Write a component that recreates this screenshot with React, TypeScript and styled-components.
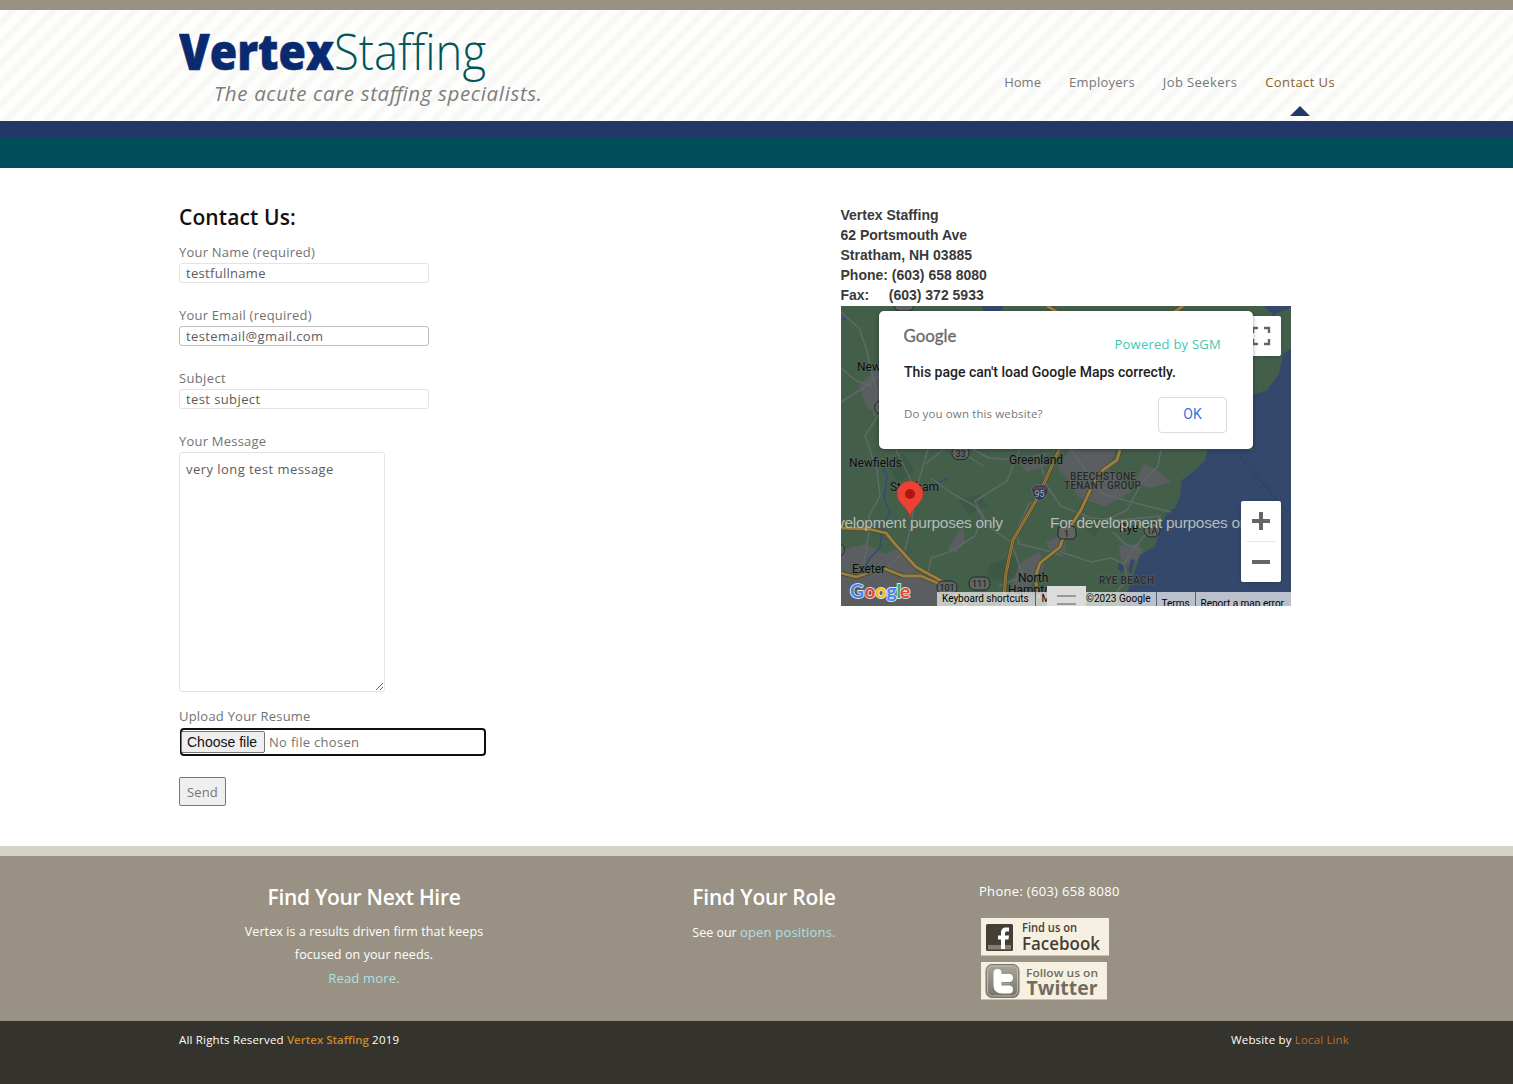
import React from 'react';
import styled, { createGlobalStyle } from 'styled-components';

const GlobalStyle = createGlobalStyle`
  *, *::before, *::after { box-sizing: border-box; }
  html, body { margin: 0; padding: 0; background: #fff; }
  body { font-family: "Open Sans", "Noto Sans", sans-serif; font-size: 13px; color: #666; }
  h1, h2, p { margin: 0; }
  a { color: inherit; text-decoration: none; }
`;

const Page = styled.div`
  display: flex;
  flex-direction: column;
  height: 1084px;
  overflow: hidden;
`;

const Header = styled.header`
  height: 121px;
  flex: none;
  display: flex;
  justify-content: space-between;
  padding: 0 178px 0 179px;
  border-top: 10px solid #999284;
  background: repeating-linear-gradient(135deg, #fefefd 0, #fefefd 5px, #f7f7f6 8px, #f7f7f6 11px, #fefefd 14.4px);
`;

const NavyBar = styled.div`
  height: 16px;
  flex: none;
  background: #233769;
`;

const TealBar = styled.div`
  height: 31px;
  flex: none;
  background: #004e59;
`;

const Logo = styled.svg`
  display: block;
  margin-top: 12px;
`;

const Nav = styled.nav`
  display: flex;
  gap: 28px;
  padding-top: 61px;
`;

const NavLink = styled.a<{ $active?: boolean; $ls?: number }>`
  display: flex;
  flex-direction: column;
  align-items: center;
  line-height: 22px;
  white-space: nowrap;
  letter-spacing: ${p => p.$ls ?? 0}px;
  color: ${p => (p.$active ? '#8a6217' : '#777')};
  &::after {
    content: '';
    display: ${p => (p.$active ? 'block' : 'none')};
    margin-top: 13px;
    border: solid transparent;
    border-width: 0 10px 10px;
    border-bottom-color: #233769;
  }
`;

const Main = styled.main`
  height: 678px;
  flex: none;
  display: grid;
  grid-template-columns: 661.5px 450px;
  padding: 37px 0 0 179px;
`;

const Title = styled.h1`
  font-size: 21px;
  font-weight: 600;
  line-height: 24px;
  letter-spacing: 0.1px;
  color: #111;
  margin-bottom: 13px;
`;

const Form = styled.form`
  display: flex;
  flex-direction: column;
  align-items: flex-start;
`;

const Field = styled.label`
  display: flex;
  flex-direction: column;
  margin-bottom: 22px;
`;

const Caption = styled.span<{ $ls?: number }>`
  line-height: 20px;
  height: 21px;
  letter-spacing: ${p => p.$ls ?? 0.22}px;
  color: #737373;
`;

const Input = styled.input<{ $strong?: boolean; $ls?: number }>`
  width: 250px;
  height: 20px;
  padding: 0 6px;
  border: 1px solid ${p => (p.$strong ? '#bdbdbd' : '#e4e4e4')};
  border-radius: 3px;
  outline: none;
  background: #fff;
  font: 13px "Open Sans", sans-serif;
  letter-spacing: ${p => p.$ls ?? 0.3}px;
  color: #5c5c5c;
`;

const MessageBox = styled.textarea`
  display: block;
  width: 206px;
  height: 240px;
  padding: 6px;
  border: 1px solid #e4e4e4;
  border-radius: 3px;
  outline: none;
  font: 13px/20px "Open Sans", sans-serif;
  letter-spacing: 0.45px;
  color: #5c5c5c;
  resize: both;
`;

const MessageField = styled(Field)`
  margin-bottom: 14px;
`;

const FileBox = styled.div`
  display: flex;
  align-items: center;
  gap: 4px;
  width: 306px;
  height: 28px;
  margin: 1px 0 0 1px;
  border: 2px solid #101010;
  border-radius: 4px;
  color: #737373;
  letter-spacing: 0.3px;
`;

const FileButton = styled.span`
  height: 22px;
  width: 84px;
  margin-left: -1px;
  padding-left: 5px;
  border: 1px solid #767676;
  border-radius: 2px;
  background: #efefef;
  font: 14px/20px "Liberation Sans", Arial, sans-serif;
  letter-spacing: 0;
  color: #111;
`;

const SendButton = styled.button`
  width: 47px;
  height: 29px;
  margin-top: -1px;
  padding: 0;
  border: 1px solid #767676;
  border-radius: 2px;
  background: #efefef;
  font: 13px "Open Sans", sans-serif;
  letter-spacing: 0.15px;
  color: #777;
`;

const Address = styled.address`
  font: bold 14px/20px "Liberation Sans", Arial, sans-serif;
  color: #3a3a3a;
  white-space: pre;
  margin-bottom: 1px;
`;

const MapFrame = styled.div`
  position: relative;
  width: 450px;
  height: 300px;
  overflow: hidden;
  background: #435f4a;
`;

const MapArt = styled.svg`
  display: block;
`;

const Control = styled.div<{ $top: number; $height: number }>`
  position: absolute;
  top: ${p => p.$top}px;
  right: 10px;
  width: 40px;
  height: ${p => p.$height}px;
  border-radius: 2px;
  background: #fff;
  box-shadow: 0 1px 4px -1px rgba(0, 0, 0, 0.3);
`;

const Dialog = styled.div`
  position: absolute;
  top: 5px;
  left: 38px;
  width: 374px;
  height: 138px;
  padding: 14px 25.5px 0;
  border-radius: 5px;
  background: #fff;
  box-shadow: 0 1px 4px rgba(0, 0, 0, 0.35);
`;

const DialogTop = styled.div`
  display: flex;
  justify-content: space-between;
  height: 38px;
`;

const Powered = styled.span`
  margin-top: 9px;
  padding-right: 6px;
  line-height: 20px;
  letter-spacing: 0.25px;
  color: #41c8b2;
`;

const DialogText = styled.p`
  font: 500 14px/18px Roboto, sans-serif;
  letter-spacing: 0;
  color: #212121;
`;

const DialogBottom = styled.div`
  display: flex;
  align-items: center;
  justify-content: space-between;
  height: 36px;
  margin-top: 16px;
  font-size: 11.5px;
  line-height: 16px;
  letter-spacing: 0.12px;
  color: #777;
`;

const Question = styled.span`
  padding-bottom: 2px;
`;

const OkButton = styled.span`
  width: 69px;
  height: 36px;
  border: 1px solid #dadce0;
  border-radius: 4px;
  text-align: center;
  font: 14px/33px Roboto, sans-serif;
  color: #3674e0;
`;

const Attribution = styled.div`
  position: absolute;
  left: 96px;
  right: 0;
  bottom: 0;
  height: 14px;
  display: flex;
  overflow: hidden;
  background: rgba(245, 245, 245, 0.7);
  font: 10px/14px Roboto, sans-serif;
  color: #000;
`;

const Credit = styled.span<{ $w: number; $drop?: boolean; $right?: boolean }>`
  flex: none;
  width: ${p => p.$w}px;
  padding: ${p => (p.$drop ? '5px' : '0')} 5px 0;
  border-left: 1px solid #56617a;
  text-align: ${p => (p.$right ? 'right' : 'left')};
  white-space: nowrap;
  &:first-child { border-left: 0; padding-left: 5.5px; }
`;

const DrawerHandle = styled.div`
  position: absolute;
  left: 206px;
  top: 280px;
  width: 39px;
  height: 20px;
  padding: 9px 10px 0;
  background: #dcdcdc;
  &::before {
    content: '';
    display: block;
    height: 10px;
    border: solid #999;
    border-width: 2px 0;
  }
`;

const Footer = styled.footer`
  height: 175px;
  flex: none;
  display: grid;
  grid-template-columns: repeat(3, 370px);
  column-gap: 30px;
  padding: 0 0 0 179px;
  border-top: 10px solid #d5d4c8;
  background: #999284;
  color: #fff;
`;

const Column = styled.section<{ $left?: boolean }>`
  padding-top: ${p => (p.$left ? 25 : 29)}px;
  text-align: ${p => (p.$left ? 'left' : 'center')};
`;

const FooterTitle = styled.h2<{ $ls: number }>`
  font-size: 21px;
  font-weight: 600;
  line-height: 24px;
  letter-spacing: ${p => p.$ls}px;
  margin-bottom: 11px;
`;

const FooterText = styled.p<{ $ls?: number; $gap?: number }>`
  padding-top: ${p => p.$gap ?? 0}px;
  font-size: 12.5px;
  line-height: 23.4px;
  letter-spacing: ${p => p.$ls ?? 0.1}px;
`;

const PaleLink = styled.a`
  font-size: 13px;
  letter-spacing: 0.18px;
  color: #ade0e2;
`;

const Phone = styled.p`
  font-size: 13px;
  line-height: 20px;
  letter-spacing: 0.3px;
  margin-bottom: 17px;
`;

const Badge = styled.svg`
  display: block;
  margin: 0 0 5.5px 1.5px;
`;

const Legal = styled.div`
  flex: 1;
  display: flex;
  justify-content: space-between;
  padding: 9px 164px 0 179px;
  background: #35332d;
  font-size: 11.5px;
  line-height: 20px;
  letter-spacing: 0.18px;
  color: #fff;
`;

const Amber = styled.a<{ $bold?: boolean }>`
  color: ${p => (p.$bold ? '#c98a2b' : '#b5702c')};
  font-weight: ${p => (p.$bold ? 600 : 400)};
  letter-spacing: ${p => (p.$bold ? 0 : 0.15)}px;
`;

const roads = [
  'M0 6 L18 22 L26 45 L30 65 L36 84 L33 110',
  'M0 62 L14 74 L30 80 M0 96 L22 82 L38 70',
  'M38 108 L24 130 L36 165 L39 190 L28 210 L28 226 L22 262',
  'M50 134 L67 168 L75 185 M88 140 L82 160 L75 185',
  'M75 185 L70 220 L64 244 L40 268',
  'M102 144 L84 158 M126 140 L148 152 L180 154 L205 148',
  'M178 144 L166 175 L134 195 L142 210 L134 230 L108 246 L90 252 L87 268',
  'M90 172 L112 188 L134 200 L150 222 L170 236 L182 270 L158 280',
  'M112 140 L142 160 M202 190 L188 198 L175 226 L178 238 L200 243 L222 250',
  'M198 152 L206 180 L220 200 L250 212 L280 214 L320 210',
  'M230 144 L246 166 L262 188 L290 196 L330 206',
  'M320 144 L317 160 L300 178 L286 204 L264 215',
  'M220 246 L250 256 L270 252 L283 258 L290 246 L318 212',
  'M283 258 L286 272 L276 286 L262 300 M272 226 L284 238 L300 244',
];

const highways = [
  'M218 144 L197 191 L172 234 L165 267 L162 300',
  'M279 144 L276 154 L262 164 L252 178 L240 204 L222 232 L219 241 L199 257 L194 272 L198 292',
  'M0 222 L28 223 L45 227 L54 238 L75 261 L106 278',
  'M0 267 L15 271 L42 262 L62 270 L80 270 L108 282 L126 300',
  'M206 0 L218 7 M330 8 L342 0',
];

const MapDrawing = () => (
  <MapArt width="450" height="300" viewBox="0 0 450 300">
    <rect width="450" height="300" fill="#435f4a" />
    <g fill="#3d5845">
      <path d="M45 155l18-8 10 18-16 12zM150 258l24-8 8 14-16 12-20-4zM118 194l22-6 6 12-18 8zM240 218l24-8-10 22z" />
    </g>
    <g fill="#5a5e61">
      <path d="M18 80l14-14 8-16v58l-14-6zM0 244l24-6 20 10 14-6 16 22 22 10 8 26H0z" />
      <path d="M228 144h46l-6 20 16 12 6 10-26 14-26-8-12-20-10-10z" />
      <path d="M302 158l14 6 14 12-20 6-16-4zM174 152l24-4 8 12-20 6zM112 234l10-14 2 16-8 10-10-2zM178 258l20-12 6 14-18 26 8 14h-30l10-30zM278 240l20-2 4 10-12 14-10-8zM205 236l18-8 2 16-14 6z" />
    </g>
    <g fill="#34486c">
      <path d="M366 144L364 154L352 166L341 174L339 191L334 202L326 207L319 221L314 241L307 244L299 249L291 274L286 286L280 300H450V40L439 51L437 67L426 84L412 89V144Z" />
      <path d="M422 0l10 8-4 8 8 4 14-12V0zM141 0h22l-4 6h-16zM450 60h-10l-4 12 14 12z" />
      <path d="M278 256l6 2-2 8-5-2zM290 253l4 1-4 14-3-4z" />
    </g>
    <path d="M412 50l20-6 10 4-4 20-12 16-14 4z" fill="#435f4a" />
    <path d="M434 8l16-6v40l-10 8-6-12z" fill="#435f4a" />
    <path d="M40 52l-6 10M6 12l-6 2M41 160l5 10-3 22 6 14-8 18-2 18-10 10-6 10M98 176l10-4" stroke="#354e70" strokeWidth="1.600" fill="none" />
    <path d="M393 144L450 210" stroke="#253653" strokeDasharray="2 2" fill="none" />
    <g fill="none" stroke="#5f6967" strokeWidth="1.500" strokeLinejoin="round">
      {roads.map(d => <path key={d} d={d} />)}
    </g>
    <g fill="none" stroke="#57491f" strokeWidth="4.600" strokeLinejoin="round">
      {highways.map(d => <path key={d} d={d} />)}
    </g>
    <g fill="none" stroke="#95804a" strokeWidth="2.800" strokeLinejoin="round">
      {highways.map(d => <path key={d} d={d} />)}
    </g>
    <path d="M218 144 L197 191 L172 234 L165 267 L162 300" fill="none" stroke="#6b5a2d" strokeWidth="0.800" />
    <g fill="#5f6561" stroke="#22282a" strokeWidth="1">
      <rect x="53" y="-9" width="20" height="14" rx="6" />
      <rect x="111" y="140.500" width="17" height="13" rx="6" />
      <rect x="96" y="275" width="20" height="13" rx="6" />
      <rect x="128" y="271" width="21" height="13" rx="6" />
      <rect x="303" y="217" width="16" height="14" rx="7" />
      <path d="M218 221q-3 11 2 12h12q5-1 2-12l-8-2z" />
      <path d="M38 95a7 7 0 0 0 0 13M0 238a7 7 0 0 1 0 12" />
    </g>
    <path d="M191 181l3-2h10l3 2c1 7-2 11-8 14-6-3-9-7-8-14z" fill="#313c55" stroke="#69727a" strokeWidth="0.800" />
    <path d="M192 182h14" stroke="#6c4343" strokeWidth="2" />
    <g fontFamily="Roboto, sans-serif" fontSize="9" fill="#15191a" textAnchor="middle">
      <text x="119.500" y="150.500">33</text>
      <text x="106" y="285">101</text>
      <text x="138.500" y="281">111</text>
      <text x="311" y="227.500">1A</text>
      <text x="225.500" y="230.500">1</text>
      <text x="198.500" y="190.500" fill="#a6abb4">95</text>
    </g>
    <g fontFamily="Roboto, sans-serif" fontSize="12" fill="#0b0d0d" stroke="#57655c" strokeWidth="1.400" paintOrder="stroke">
      <text x="16" y="65">New</text>
      <text x="8" y="161" textLength="53">Newfields</text>
      <text x="168" y="158" textLength="54">Greenland</text>
      <text x="49" y="185" textLength="49">Stratham</text>
      <text x="11" y="267" textLength="33">Exeter</text>
      <text x="177" y="276">North</text>
      <text x="167" y="288">Hampton</text>
      <text x="278" y="226">Rye</text>
    </g>
    <g fontFamily="Roboto, sans-serif" fontSize="10" fontWeight="500" fill="#26292b" stroke="#5d6561" strokeWidth="1" paintOrder="stroke">
      <text x="229" y="173.500" textLength="66">BEECHSTONE</text>
      <text x="223" y="182.500" textLength="77">TENANT GROUP</text>
      <text x="258" y="277.500" textLength="55">RYE BEACH</text>
    </g>
    <g fontFamily="Liberation Sans, Arial, sans-serif" fontSize="15.500" fill="#b5bcb8">
      <text x="-47" y="222" textLength="209">For development purposes only</text>
      <text x="209" y="222" textLength="209">For development purposes only</text>
    </g>
    <path d="M69 211C67 201 56 197 56 188a13 13 0 0 1 26 0C82 197 71 201 69 211Z" fill="#ea4335" stroke="#c5362b" strokeWidth="0.600" />
    <circle cx="69" cy="188" r="5" fill="#b31412" />
    <g fontFamily="Lato, sans-serif" fontSize="19" fontWeight="700" stroke="#dde3e0" strokeWidth="1.800" paintOrder="stroke">
      <text y="292">
        <tspan x="9" fill="#4285f4">G</tspan><tspan x="23.500" fill="#ea4335">o</tspan><tspan x="34.500" fill="#fbbc04">o</tspan><tspan x="45.500" fill="#4285f4">g</tspan><tspan x="55.500" fill="#34a853">l</tspan><tspan x="59" fill="#ea4335">e</tspan>
      </text>
    </g>
  </MapArt>
);

const MapWidget = () => (
  <MapFrame>
    <MapDrawing />
    <Control $top={10} $height={40}>
      <svg width="40" height="40" viewBox="0 0 40 40" fill="none" stroke="#666" strokeWidth="2.400">
        <path d="M12 17v-5h5M23 12h5v5M28 23v5h-5M17 28h-5v-5" />
      </svg>
    </Control>
    <Control $top={195} $height={81}>
      <svg width="40" height="81" viewBox="0 0 40 81" fill="none" stroke="#666" strokeWidth="4">
        <path d="M11 20h18M20 11v18M11 61h18" />
        <path d="M5 40.500h30" stroke="#e6e6e6" strokeWidth="1" />
      </svg>
    </Control>
    <Dialog>
      <DialogTop>
        <svg width="56" height="24" viewBox="0 0 56 24">
          <text x="-0.500" y="16.500" fontFamily="Lato, sans-serif" fontSize="16.500" fill="#6a6a6a" stroke="#6a6a6a" strokeWidth="0.300" textLength="53" lengthAdjust="spacingAndGlyphs">Google</text>
        </svg>
        <Powered>Powered by SGM</Powered>
      </DialogTop>
      <DialogText>This page can't load Google Maps correctly.</DialogText>
      <DialogBottom>
        <Question>Do you own this website?</Question>
        <OkButton>OK</OkButton>
      </DialogBottom>
    </Dialog>
    <Attribution>
      <Credit $w={98}>Keyboard shortcuts</Credit>
      <Credit $w={121} $right>Map data ©2023 Google</Credit>
      <Credit $w={39} $drop>Terms</Credit>
      <Credit $w={96} $drop>Report a map error</Credit>
    </Attribution>
    <DrawerHandle />
  </MapFrame>
);

const FacebookBadge = () => (
  <Badge width="129" height="38" viewBox="0 0 129 38">
    <rect width="128" height="37.500" fill="#f6f0e2" />
    <rect x="5" y="6" width="27" height="27" rx="1.500" fill="#453f33" />
    <rect x="7" y="27" width="23" height="4.500" fill="#857f72" />
    <path d="M20 31V21.500h-3V17.500h3v-2.500c0-4 2-5.500 5-5.500h3v4h-2c-1.500 0-2 .6-2 2v2h4l-.5 4H24V31z" fill="#fff" />
    <g fontFamily="Open Sans, sans-serif" fill="#453f33" fontWeight="600">
      <text x="41" y="14" fontSize="12" textLength="55" lengthAdjust="spacingAndGlyphs">Find us on</text>
      <text x="41" y="31.500" fontSize="18.500" textLength="78" lengthAdjust="spacingAndGlyphs">Facebook</text>
    </g>
  </Badge>
);

const TwitterBadge = () => (
  <Badge width="127" height="38" viewBox="0 0 127 38">
    <defs>
      <linearGradient id="bird" x1="0" y1="0" x2="0" y2="1">
        <stop offset="0" stopColor="#aaa69b" />
        <stop offset="1" stopColor="#78736a" />
      </linearGradient>
    </defs>
    <rect width="126" height="37.500" fill="#f6f0e2" />
    <rect x="5" y="2.500" width="33" height="33" rx="6" fill="url(#bird)" stroke="#77736a" />
    <rect x="6.500" y="4" width="30" height="30" rx="5" fill="none" stroke="#bcb8ad" />
    <path d="M16.500 11v12q0 4.500 5 4.500h6.500M16.500 16h11.500" fill="none" stroke="#fff" strokeWidth="8" strokeLinecap="round" strokeLinejoin="round" />
    <path d="M21 21.700h7" stroke="#aaa59a" strokeWidth="1.300" strokeLinecap="round" />
    <g fontFamily="Open Sans, sans-serif" fill="#716c60" fontWeight="600">
      <text x="45" y="14.500" fontSize="11.500" textLength="72" lengthAdjust="spacingAndGlyphs">Follow us on</text>
      <text x="45.500" y="33" fontSize="20" fontWeight="700" textLength="71" lengthAdjust="spacingAndGlyphs">Twitter</text>
    </g>
  </Badge>
);

export default function App() {
  return (
    <Page>
      <GlobalStyle />
      <Header>
        <Logo width="370" height="90" viewBox="0 0 370 90">
          <g fontFamily="Open Sans, sans-serif" fontSize="50">
            <text x="0" y="47.500" fontWeight="800" fill="#0a2a70" stroke="#0a2a70" strokeWidth="0.600" textLength="155" lengthAdjust="spacingAndGlyphs">Vertex</text>
            <text x="155" y="47.500" fontWeight="300" fill="#00565c" textLength="152" lengthAdjust="spacingAndGlyphs">Staffing</text>
          </g>
          <text x="35" y="79" fontFamily="Open Sans, sans-serif" fontSize="20.500" fontStyle="italic" fill="#7d7d7d" textLength="328">The acute care staffing specialists.</text>
        </Logo>
        <Nav>
          <NavLink>Home</NavLink>
          <NavLink $ls={0.25}>Employers</NavLink>
          <NavLink $ls={0.4}>Job Seekers</NavLink>
          <NavLink $ls={0.4} $active>Contact Us</NavLink>
        </Nav>
      </Header>
      <NavyBar />
      <TealBar />
      <Main>
        <Form>
          <Title>Contact Us:</Title>
          <Field>
            <Caption>Your Name (required)</Caption>
            <Input defaultValue="testfullname" />
          </Field>
          <Field>
            <Caption>Your Email (required)</Caption>
            <Input $strong $ls={0.4} defaultValue="testemail@gmail.com" />
          </Field>
          <Field>
            <Caption $ls={0.35}>Subject</Caption>
            <Input $ls={0.4} defaultValue="test subject" />
          </Field>
          <MessageField>
            <Caption>Your Message</Caption>
            <MessageBox defaultValue="very long test message" />
          </MessageField>
          <Field>
            <Caption>Upload Your Resume</Caption>
            <FileBox>
              <FileButton>Choose file</FileButton>
              <span>No file chosen</span>
            </FileBox>
          </Field>
          <SendButton type="button">Send</SendButton>
        </Form>
        <div>
          <Address>{'Vertex Staffing\n62 Portsmouth Ave\nStratham, NH 03885\nPhone: (603) 658 8080\nFax:     (603) 372 5933'}</Address>
          <MapWidget />
        </div>
      </Main>
      <Footer>
        <Column>
          <FooterTitle $ls={-0.3}>Find Your Next Hire</FooterTitle>
          <FooterText>Vertex is a results driven firm that keeps<br />focused on your needs.<br /><PaleLink>Read more.</PaleLink></FooterText>
        </Column>
        <Column>
          <FooterTitle $ls={-0.2}>Find Your Role</FooterTitle>
          <FooterText $ls={0} $gap={1}>See our <PaleLink>open positions.</PaleLink></FooterText>
        </Column>
        <Column $left>
          <Phone>Phone: (603) 658 8080</Phone>
          <FacebookBadge />
          <TwitterBadge />
        </Column>
      </Footer>
      <Legal>
        <span>All Rights Reserved <Amber $bold>Vertex Staffing</Amber> 2019</span>
        <span>Website by <Amber>Local Link</Amber></span>
      </Legal>
    </Page>
  );
}
